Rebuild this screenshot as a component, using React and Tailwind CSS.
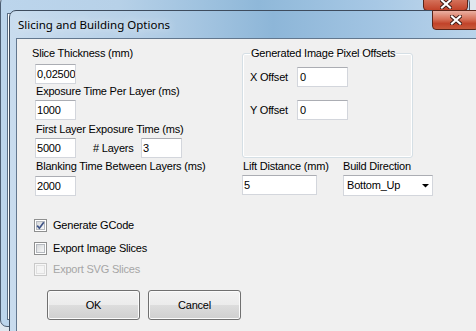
import React from 'react';

const TextBox = ({ className = '', children }) => (
  <div className={`h-[20px] bg-white border border-[#d3d6dc] border-t-[#abadb3] flex items-center pl-[1px] overflow-hidden whitespace-nowrap text-black ${className}`}>
    {children}
  </div>
);

const CheckBox = ({ checked, disabled, label }) => (
  <div className="flex items-center h-[13px] ml-[2px]">
    <div className={`w-[13px] h-[13px] border p-[1px] relative ${disabled ? 'border-[#c9c9c9] bg-[#f7f7f7]' : 'border-[#8e8f8f] bg-white'}`}>
      <div className={`w-full h-full border ${disabled ? 'border-[#e0e0e0] bg-[#f4f4f4]' : 'border-[#b5b9bf] bg-[linear-gradient(135deg,#d6d8da,#f7f8f8)]'}`} />
      {checked && (
        <svg className="absolute left-0 top-0" width="11" height="11" viewBox="0 0 11 11">
          <path d="M2.2 5.6 L4.4 8.2 L8.8 2.2" fill="none" stroke="#3f5487" strokeWidth="1.7" />
        </svg>
      )}
    </div>
    <span className={`ml-[6px] ${disabled ? 'text-[#a6a6a6]' : 'text-black'}`}>{label}</span>
  </div>
);

const Button = ({ children }) => (
  <div className="w-[93px] h-[30px] rounded-[3px] border border-[#707070] shadow-[inset_0_0_0_1px_#fbfbfb] bg-[linear-gradient(to_bottom,#f2f2f2_0%,#ebebeb_50%,#dddddd_50%,#cfcfcf_100%)] flex items-center justify-center text-black">
    {children}
  </div>
);

const CloseGlyph = () => (
  <svg width="12" height="10" viewBox="0 0 12 10">
    <path d="M2 1.5 L10 8.5 M10 1.5 L2 8.5" stroke="#3a1a14" strokeWidth="4" strokeLinecap="square" />
    <path d="M2 1.5 L10 8.5 M10 1.5 L2 8.5" stroke="#ffffff" strokeWidth="2.2" strokeLinecap="square" />
  </svg>
);

export default function App() {
  return (
    <div className="w-[476px] h-[331px] relative overflow-hidden bg-[#dfe7ef] font-['Liberation_Sans',Arial,sans-serif] text-[11px] leading-[13px] tracking-[-0.2px]">
      {/* window behind */}
      <div className="absolute left-0 top-[-4px] w-[470px] h-[331px] rounded-[7px] border border-[#4c5d72] bg-[linear-gradient(to_right,#bcd5ec_0%,#b7d1e8_25%,#8fb8d9_55%,#a7c8e5_80%,#c2d8ec_100%)]">
        <div className="absolute left-[6px] top-[16px] right-[6px] bottom-[6px] border border-[#5b6e84] bg-white" />
        <div className="absolute left-[422px] top-[-6px] w-[45px] h-[20px] rounded-b-[4px] border border-[#5a2418] bg-[linear-gradient(to_bottom,#e8a999,#d26c55_50%,#c2432a)] flex items-end justify-center pb-[1px]">
          <CloseGlyph />
        </div>
      </div>

      {/* dialog */}
      <div className="absolute left-[9px] top-[10px] w-[480px] h-[340px] rounded-t-[7px] border border-[#3e4c5e] bg-[linear-gradient(to_right,#c9dcee_0%,#b3cee6_30%,#8db6d8_55%,#a3c5e3_78%,#bcd5eb_100%)] flex flex-col">
        <div className="h-[27px] flex items-center pl-[8px] relative">
          <span className="font-['Noto_Sans',sans-serif] text-[11.5px] leading-[16px] tracking-normal text-black [text-shadow:0_0_8px_rgba(255,255,255,0.9)]">
            Slicing and Building Options
          </span>
          <div className="absolute left-[422px] top-[-1px] w-[47px] h-[20px] rounded-b-[4px] border border-[#5a2418] bg-[linear-gradient(to_bottom,#eab0a2,#d7725a_45%,#c2432a_70%,#c85a3c)] flex items-center justify-center">
            <CloseGlyph />
          </div>
        </div>
        <div className="flex-1 pl-[6px]">
          <div className="h-full border-l border-t border-[#62778e] bg-[#f0f0f0] pl-[15px] pt-[8px]">
            {/* upper section */}
            <div className="flex">
              <div className="w-[210px] flex flex-col">
                <div>Slice Thickness (mm)</div>
                <TextBox className="w-[41px] ml-[3px] mt-[4px]">0,02500</TextBox>
                <div className="ml-[4px] mt-[1px]">Exposure Time Per Layer (ms)</div>
                <TextBox className="w-[41px] ml-[3px] mt-[2px]">1000</TextBox>
                <div className="ml-[4px] mt-[3px]">First Layer Exposure Time (ms)</div>
                <div className="flex items-start mt-[2px] ml-[3px]">
                  <TextBox className="w-[41px]">5000</TextBox>
                  <div className="ml-[17px] mt-[4px] w-[48px]"># Layers</div>
                  <TextBox className="w-[41px]">3</TextBox>
                </div>
              </div>
              <fieldset className="w-[171px] border border-[#d5dfe5] rounded-[3px] shadow-[inset_0_0_0_1px_#ffffff] pl-[7px] pb-[14px]">
                <legend className="px-[1px]">Generated Image Pixel Offsets</legend>
                <div className="flex items-center mt-[7px]">
                  <span className="w-[47px]">X Offset</span>
                  <TextBox className="w-[51px] pl-[2px]">0</TextBox>
                </div>
                <div className="flex items-center mt-[13px]">
                  <span className="w-[47px]">Y Offset</span>
                  <TextBox className="w-[51px] pl-[2px]">0</TextBox>
                </div>
              </fieldset>
            </div>

            {/* second row */}
            <div className="flex items-start mt-[2px]">
              <div className="w-[210px] flex flex-col">
                <div className="ml-[4px]">Blanking Time Between Layers (ms)</div>
                <TextBox className="w-[41px] ml-[3px] mt-[3px]">2000</TextBox>
              </div>
              <div className="w-[101px] flex flex-col">
                <div className="ml-[1px]">Lift Distance (mm)</div>
                <TextBox className="w-[75px] mt-[2px]">5</TextBox>
              </div>
              <div className="flex flex-col">
                <div>Build Direction</div>
                <div className="w-[90px] h-[21px] mt-[2px] bg-white border border-[#d3d6dc] border-t-[#abadb3] flex items-center pl-[3px] text-black relative">
                  Bottom_Up
                  <svg className="absolute left-[78px] top-[8px]" width="8" height="4" viewBox="0 0 8 4">
                    <path d="M0 0 L7 0 L3.5 3.5 Z" fill="#000" />
                  </svg>
                </div>
              </div>
            </div>

            {/* checkboxes */}
            <div className="mt-[23px]">
              <CheckBox checked label="Generate GCode" />
            </div>
            <div className="mt-[10px]">
              <CheckBox label="Export Image Slices" />
            </div>
            <div className="mt-[8px]">
              <CheckBox disabled label="Export SVG Slices" />
            </div>

            {/* buttons */}
            <div className="flex gap-[8px] ml-[15px] mt-[14px]">
              <Button>OK</Button>
              <Button>Cancel</Button>
            </div>
          </div>
        </div>
      </div>
    </div>
  );
}
